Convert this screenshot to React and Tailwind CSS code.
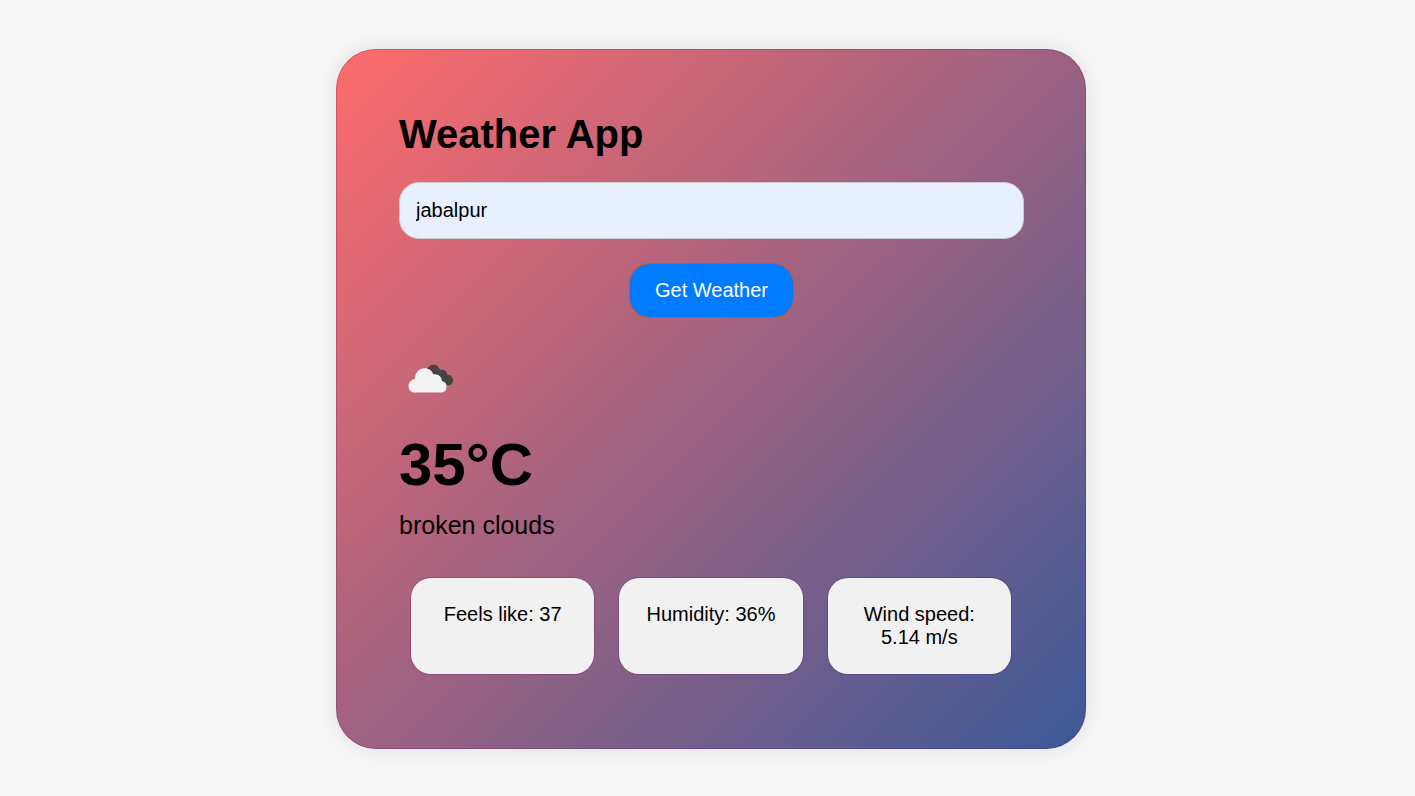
import { useState } from "react";

function BrokenClouds() {
  return (
    <svg viewBox="0 0 62 62" className="size-[62px]" role="img" aria-label="broken clouds">
      <path
        d="M28 19.500C29 16.500 31.500 14.800 34.500 14.800C37.500 14.800 40 16.500 41 20C44.500 19 48 21 48.500 24.800C51.800 25 54 27.500 54 30.500C54 33.500 51.500 35.500 48.500 35.200L42 34L28 24Z"
        fill="#444444"
      />
      <path
        d="M15.500 42.500C12 42.500 9.500 39.800 9.500 36C9.500 32.500 12 29.500 16 29C16 22.500 20 18.300 25.500 18.300C29.800 18.300 33 20.500 34.300 24.300C39 23.500 42.800 26.500 43 31C46 31.500 47.500 33.800 47.500 36.500C47.500 40 45.500 42.500 42 42.500Z"
        fill="#f2f2f2"
      />
    </svg>
  );
}

const details = ["Feels like: 37", "Humidity: 36%", "Wind speed: 5.14 m/s"];

export default function App() {
  const [city, setCity] = useState("jabalpur");

  return (
    <div className="flex min-h-screen items-center justify-center bg-[#f7f7f7] pt-[2px] pl-[7px] font-['Liberation_Sans',Arial,sans-serif] text-xl leading-[23px] text-black">
      <main className="w-full max-w-[750px] rounded-[40px] bg-[linear-gradient(135deg,#ff6b6b,#3b5998)] pt-[62px] pr-[62px] pb-[75px] pl-[63px] shadow-[0_0_25px_rgba(0,0,0,0.1),inset_0_0_0_1px_rgba(80,0,90,0.2)]">
        <h1 className="text-[40px] leading-[46px] font-bold">Weather App</h1>
        <form className="mt-[25px] flex flex-col items-center gap-6" onSubmit={(e) => e.preventDefault()}>
          <input
            type="text"
            aria-label="City"
            value={city}
            onChange={(e) => setCity(e.target.value)}
            className="h-[57px] w-full rounded-[20px] border border-[#ccc] bg-[#e8f0fe] px-4 outline-none"
          />
          <button
            type="submit"
            className="h-[55px] rounded-[20px] border border-[#b8602c] bg-[#007bff] bg-clip-padding px-[25px] text-white"
          >
            Get Weather
          </button>
        </form>
        <section className="mt-8">
          <BrokenClouds />
          <p className="mt-[18px] text-[60px] leading-[69px] font-bold">35°C</p>
          <p className="mt-3 text-[25px] leading-[29px]">broken clouds</p>
          <ul className="mt-[38px] grid grid-cols-3 gap-[25px] pr-[13px] pl-3 text-center">
            {details.map((detail) => (
              <li key={detail} className="rounded-[20px] bg-[#f1f1f1] p-[25px] shadow-[0_0_0_1px_rgba(80,0,90,0.2)]">
                {detail}
              </li>
            ))}
          </ul>
        </section>
      </main>
    </div>
  );
}
